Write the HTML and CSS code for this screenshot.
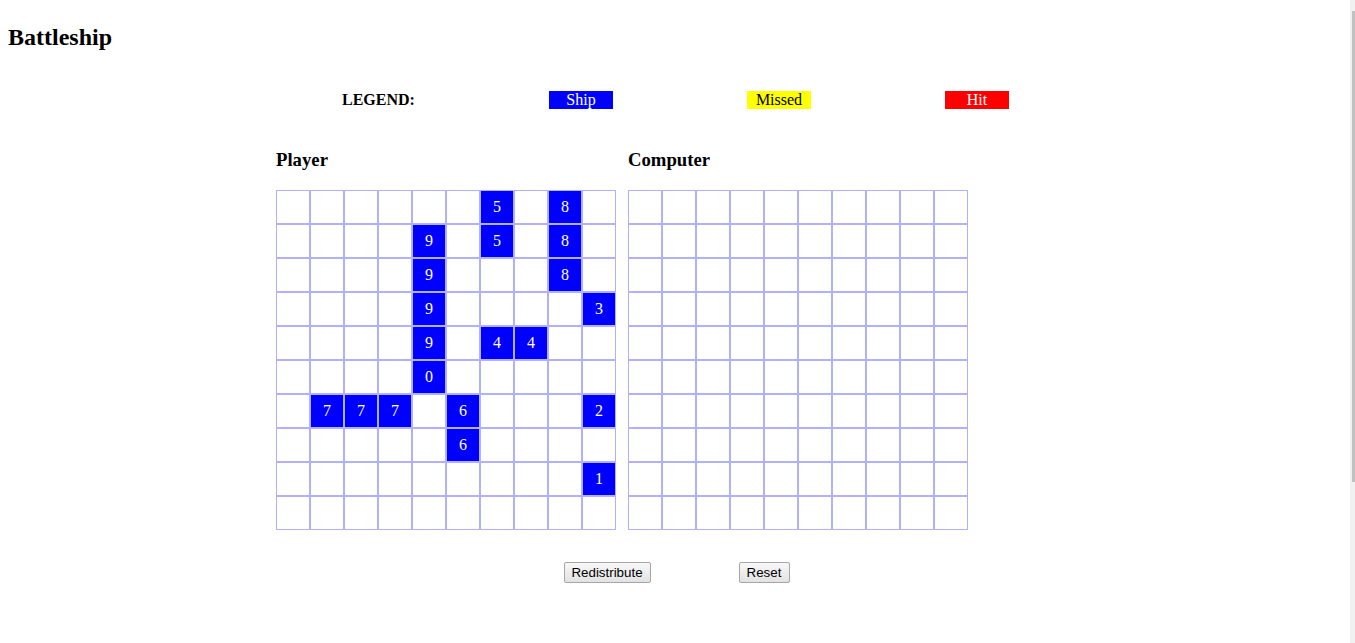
FILE: index.html
```html
<!DOCTYPE html>
<html>
<head>
<meta charset="utf-8">
<title>Battleship</title>
<link rel="stylesheet" href="styles.css">
</head>
<body>
<h2 class="title">Battleship</h2>
<div class="legend">
  <span class="legend-label">LEGEND:</span>
  <span class="legend-box ship">Ship</span>
  <span class="legend-box missed">Missed</span>
  <span class="legend-box hit">Hit</span>
</div>
<div class="boards">
  <div class="board">
    <h3 class="board-title">Player</h3>
    <div class="grid">
      <div class="cell"></div><div class="cell"></div><div class="cell"></div><div class="cell"></div><div class="cell"></div><div class="cell"></div><div class="cell ship">5</div><div class="cell"></div><div class="cell ship">8</div><div class="cell"></div>
      <div class="cell"></div><div class="cell"></div><div class="cell"></div><div class="cell"></div><div class="cell ship">9</div><div class="cell"></div><div class="cell ship">5</div><div class="cell"></div><div class="cell ship">8</div><div class="cell"></div>
      <div class="cell"></div><div class="cell"></div><div class="cell"></div><div class="cell"></div><div class="cell ship">9</div><div class="cell"></div><div class="cell"></div><div class="cell"></div><div class="cell ship">8</div><div class="cell"></div>
      <div class="cell"></div><div class="cell"></div><div class="cell"></div><div class="cell"></div><div class="cell ship">9</div><div class="cell"></div><div class="cell"></div><div class="cell"></div><div class="cell"></div><div class="cell ship">3</div>
      <div class="cell"></div><div class="cell"></div><div class="cell"></div><div class="cell"></div><div class="cell ship">9</div><div class="cell"></div><div class="cell ship">4</div><div class="cell ship">4</div><div class="cell"></div><div class="cell"></div>
      <div class="cell"></div><div class="cell"></div><div class="cell"></div><div class="cell"></div><div class="cell ship">0</div><div class="cell"></div><div class="cell"></div><div class="cell"></div><div class="cell"></div><div class="cell"></div>
      <div class="cell"></div><div class="cell ship">7</div><div class="cell ship">7</div><div class="cell ship">7</div><div class="cell"></div><div class="cell ship">6</div><div class="cell"></div><div class="cell"></div><div class="cell"></div><div class="cell ship">2</div>
      <div class="cell"></div><div class="cell"></div><div class="cell"></div><div class="cell"></div><div class="cell"></div><div class="cell ship">6</div><div class="cell"></div><div class="cell"></div><div class="cell"></div><div class="cell"></div>
      <div class="cell"></div><div class="cell"></div><div class="cell"></div><div class="cell"></div><div class="cell"></div><div class="cell"></div><div class="cell"></div><div class="cell"></div><div class="cell"></div><div class="cell ship">1</div>
      <div class="cell"></div><div class="cell"></div><div class="cell"></div><div class="cell"></div><div class="cell"></div><div class="cell"></div><div class="cell"></div><div class="cell"></div><div class="cell"></div><div class="cell"></div>
    </div>
  </div>
  <div class="board">
    <h3 class="board-title">Computer</h3>
    <div class="grid">
      <div class="cell"></div><div class="cell"></div><div class="cell"></div><div class="cell"></div><div class="cell"></div><div class="cell"></div><div class="cell"></div><div class="cell"></div><div class="cell"></div><div class="cell"></div>
      <div class="cell"></div><div class="cell"></div><div class="cell"></div><div class="cell"></div><div class="cell"></div><div class="cell"></div><div class="cell"></div><div class="cell"></div><div class="cell"></div><div class="cell"></div>
      <div class="cell"></div><div class="cell"></div><div class="cell"></div><div class="cell"></div><div class="cell"></div><div class="cell"></div><div class="cell"></div><div class="cell"></div><div class="cell"></div><div class="cell"></div>
      <div class="cell"></div><div class="cell"></div><div class="cell"></div><div class="cell"></div><div class="cell"></div><div class="cell"></div><div class="cell"></div><div class="cell"></div><div class="cell"></div><div class="cell"></div>
      <div class="cell"></div><div class="cell"></div><div class="cell"></div><div class="cell"></div><div class="cell"></div><div class="cell"></div><div class="cell"></div><div class="cell"></div><div class="cell"></div><div class="cell"></div>
      <div class="cell"></div><div class="cell"></div><div class="cell"></div><div class="cell"></div><div class="cell"></div><div class="cell"></div><div class="cell"></div><div class="cell"></div><div class="cell"></div><div class="cell"></div>
      <div class="cell"></div><div class="cell"></div><div class="cell"></div><div class="cell"></div><div class="cell"></div><div class="cell"></div><div class="cell"></div><div class="cell"></div><div class="cell"></div><div class="cell"></div>
      <div class="cell"></div><div class="cell"></div><div class="cell"></div><div class="cell"></div><div class="cell"></div><div class="cell"></div><div class="cell"></div><div class="cell"></div><div class="cell"></div><div class="cell"></div>
      <div class="cell"></div><div class="cell"></div><div class="cell"></div><div class="cell"></div><div class="cell"></div><div class="cell"></div><div class="cell"></div><div class="cell"></div><div class="cell"></div><div class="cell"></div>
      <div class="cell"></div><div class="cell"></div><div class="cell"></div><div class="cell"></div><div class="cell"></div><div class="cell"></div><div class="cell"></div><div class="cell"></div><div class="cell"></div><div class="cell"></div>
    </div>
  </div>
</div>
<div class="actions">
  <button class="btn btn-redistribute" type="button">Redistribute</button>
  <button class="btn btn-reset" type="button">Reset</button>
</div>
<div class="scrollbar"><div class="scrollbar-thumb"></div></div>
</body>
</html>
```
FILE: styles.css
```css
html, body {
  margin: 0;
  padding: 0;
  background: #fff;
}
body {
  padding: 8px;
  font-family: "Liberation Serif", "Times New Roman", serif;
  font-size: 16px;
  color: #000;
  overflow: hidden;
  height: 627px;
  box-sizing: border-box;
}
.title {
  font-size: 24px;
  font-weight: bold;
  margin: 15px 0 0 0;
  line-height: 28px;
}
.legend {
  display: grid;
  grid-template-columns: 73px 64px 64px 64px;
  column-gap: 134px;
  align-items: center;
  padding-left: 334px;
  margin-top: 40px;
  height: 18px;
}
.legend-label {
  font-weight: bold;
  line-height: 18px;
  white-space: nowrap;
}
.legend-box {
  display: block;
  width: 64px;
  height: 18px;
  line-height: 18px;
  text-align: center;
}
.legend-box.ship { background: #0000ff; color: #fff; }
.legend-box.missed { background: #ffff00; color: #000; }
.legend-box.hit { background: #ff0000; color: #fff; }
.boards {
  display: flex;
  gap: 12px;
  padding-left: 268px;
  margin-top: 40px;
}
.board-title {
  font-size: 18.72px;
  font-weight: bold;
  line-height: 21px;
  margin: 0 0 20px 0;
}
.grid {
  display: grid;
  grid-template-columns: repeat(10, 34px);
  grid-auto-rows: 34px;
}
.cell {
  box-sizing: border-box;
  border: 1px solid #b0b0ff;
  text-align: center;
  line-height: 32px;
  font-size: 16px;
}
.cell.ship {
  background: #0000ff;
  color: #fff;
}
.actions {
  display: flex;
  justify-content: center;
  gap: 88px;
  margin-top: 32px;
  padding-right: 2px;
}
.btn {
  font-family: "Liberation Sans", Arial, sans-serif;
  font-size: 13.33px;
  height: 21px;
  padding: 0;
  line-height: 17px;
  border: 1px solid #a6a6a6;
  border-radius: 2px;
  background: linear-gradient(#f8f8f8, #e2e2e2);
  color: #000;
  text-align: center;
}
.btn-redistribute { width: 87px; }
.btn-reset { width: 51px; }
.scrollbar {
  position: fixed;
  top: 0;
  right: 0;
  width: 5px;
  height: 643px;
  background: #f1f1f1;
}
.scrollbar-thumb {
  margin: 11px 0 0 2px;
  width: 3px;
  height: 471px;
  background: #c1c1c1;
}
```
